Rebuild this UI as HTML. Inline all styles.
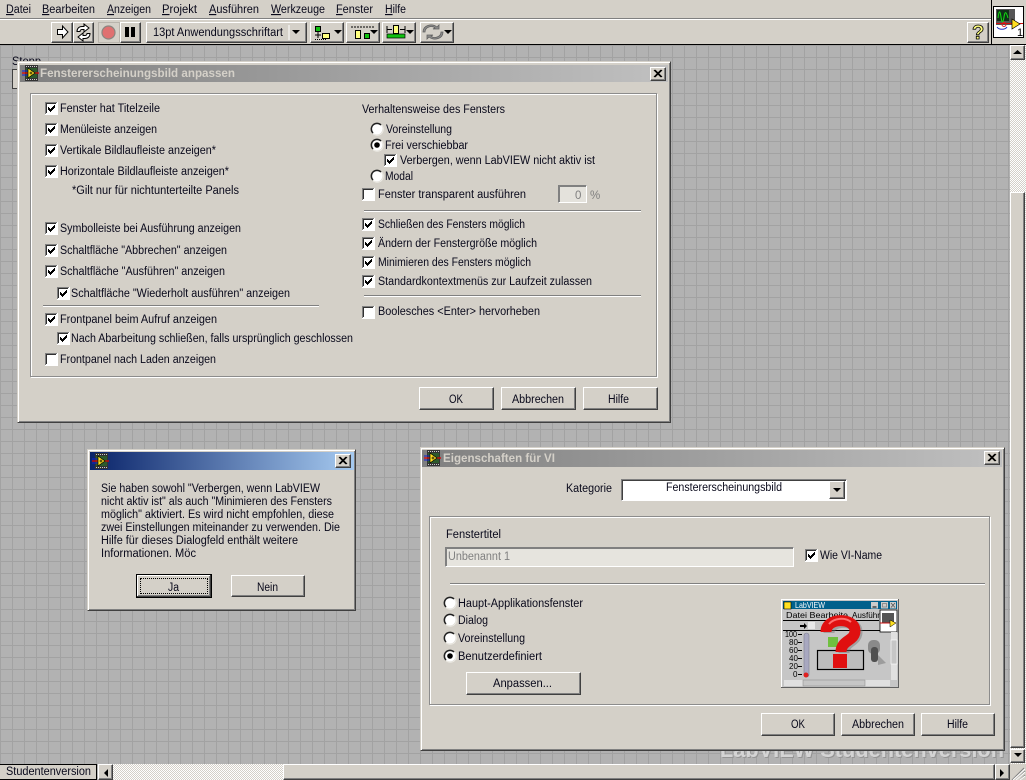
<!DOCTYPE html>
<html lang="de"><head><meta charset="utf-8"><title>LabVIEW</title>
<style>
html,body{margin:0;padding:0;width:1026px;height:780px;overflow:hidden;background:#b2b2b2}
.a,.b,.d,.t{position:absolute;box-sizing:border-box}
.a{background:#d4d0c8}
.b{background:#d4d0c8;border:1px solid;border-color:#fff #404040 #404040 #fff;box-shadow:inset -1px -1px #808080}
.d{background:#d4d0c8;border:1px solid;border-color:#d4d0c8 #404040 #404040 #d4d0c8;box-shadow:inset 1px 1px #fff,inset -1px -1px #808080}
.g{position:absolute;box-sizing:border-box;border:1px solid #8c8c8c;box-shadow:inset 1px 1px #fff,1px 1px #fff}
.s{position:absolute;box-sizing:border-box;border:1px solid;border-color:#808080 #fff #fff #808080;box-shadow:inset 1px 1px #404040}
svg{position:absolute;left:0;top:0}
text{font-family:"Liberation Sans",sans-serif;font-size:11.5px;fill:#08081a}
.grid{position:absolute;left:0;top:45px;width:1026px;height:735px;background-color:#b2b2b2;background-image:linear-gradient(#a2a2a2 1px,transparent 1px),linear-gradient(90deg,#a2a2a2 1px,transparent 1px);background-size:12px 12px}
</style></head><body>
<div class="grid"></div>
<svg width="1026" height="780" viewBox="0 0 1026 780">
<text x="12" y="65" textLength="29" lengthAdjust="spacingAndGlyphs">Stopp</text>
<rect x="12.500" y="69.500" width="20" height="19" fill="#d4d0c8" stroke="#404040"/>
<text x="721" y="758" textLength="284" lengthAdjust="spacingAndGlyphs" style="font-size:22px;font-weight:bold;fill:#949494">LabVIEW Studentenversion</text>
<text x="720" y="757" textLength="284" lengthAdjust="spacingAndGlyphs" style="font-size:22px;font-weight:bold;fill:#d4d4d4">LabVIEW Studentenversion</text>
</svg>

<!-- menu + toolbar -->
<div class="a" style="left:0;top:0;width:1026px;height:45px;border-bottom:1px solid #000"></div>
<div class="a" style="left:0;top:18px;width:991px;height:2px;background:#fff;border-top:1px solid #808080"></div>
<div class="a" style="left:991px;top:0;width:1px;height:45px;background:#000"></div>
<div class="b" style="left:51px;top:22px;width:22px;height:21px"></div>
<div class="b" style="left:73px;top:22px;width:21px;height:21px"></div>
<div class="a" style="left:98px;top:22px;width:22px;height:21px;border:1px solid #b8b4ac"></div>
<div class="b" style="left:120px;top:22px;width:21px;height:21px"></div>
<div class="b" style="left:146px;top:22px;width:161px;height:21px"></div>
<div class="b" style="left:310px;top:22px;width:34px;height:21px"></div>
<div class="b" style="left:346px;top:22px;width:34px;height:21px"></div>
<div class="b" style="left:382px;top:22px;width:34px;height:21px"></div>
<div class="b" style="left:420px;top:22px;width:34px;height:21px"></div>
<div class="b" style="left:967px;top:22px;width:22px;height:21px"></div>

<!-- right + bottom scrollbars -->
<div style="position:absolute;left:1010px;top:45px;width:16px;height:719px;background:repeating-conic-gradient(#fff 0 25%,#d4d0c8 0 50%) 0 0/2px 2px"></div>
<div class="b" style="left:1010px;top:45px;width:15px;height:15px"></div>
<div class="b" style="left:1010px;top:192px;width:15px;height:556px"></div>
<div class="b" style="left:1010px;top:749px;width:15px;height:14px"></div>
<div style="position:absolute;left:112px;top:764px;width:172px;height:16px;background:repeating-conic-gradient(#fff 0 25%,#d4d0c8 0 50%) 0 0/2px 2px"></div>
<div class="a" style="left:0;top:764px;width:97px;height:16px;border:1px solid #000;border-left:0"></div>
<div class="b" style="left:98px;top:764px;width:15px;height:16px"></div>
<div class="b" style="left:283px;top:764px;width:712px;height:16px"></div>
<div class="b" style="left:995px;top:764px;width:15px;height:16px"></div>
<div class="a" style="left:1010px;top:764px;width:16px;height:16px"></div>

<!-- dialog 1 -->
<div class="d" style="left:17px;top:61px;width:654px;height:362px"></div>
<div class="t" style="left:20px;top:65px;width:648px;height:17px;background:linear-gradient(90deg,#808080,#c0c0c0)"></div>
<div class="b" style="left:650px;top:67px;width:16px;height:14px"></div>
<div class="g" style="left:30px;top:93px;width:627px;height:284px"></div>
<div class="a" style="left:43px;top:305px;width:276px;height:2px;background:#fff;border-top:1px solid #808080"></div>
<div class="a" style="left:364px;top:210px;width:277px;height:2px;background:#fff;border-top:1px solid #808080"></div>
<div class="a" style="left:364px;top:295px;width:277px;height:2px;background:#fff;border-top:1px solid #808080"></div>
<div class="s" style="left:558px;top:185px;width:29px;height:18px;background:#e4e2dc;box-shadow:inset 1px 1px #808080"></div>
<div class="b" style="left:419px;top:387px;width:75px;height:23px"></div>
<div class="b" style="left:501px;top:387px;width:75px;height:23px"></div>
<div class="b" style="left:583px;top:387px;width:75px;height:23px"></div>

<!-- dialog 2 -->
<div class="d" style="left:87px;top:449px;width:269px;height:162px"></div>
<div class="t" style="left:90px;top:452px;width:264px;height:18px;background:linear-gradient(90deg,#0a246a,#a6caf0)"></div>
<div class="b" style="left:335px;top:454px;width:16px;height:14px"></div>
<div class="b" style="left:136px;top:574px;width:76px;height:24px;border:1px solid #000;box-shadow:inset -1px -1px #404040,inset 1px 1px #fff,inset -2px -2px #808080"></div>
<div class="t" style="left:140px;top:578px;width:68px;height:16px;border:1px dotted #000"></div>
<div class="b" style="left:231px;top:575px;width:74px;height:22px"></div>

<!-- dialog 3 -->
<div class="d" style="left:420px;top:447px;width:585px;height:304px"></div>
<div class="t" style="left:422px;top:450px;width:580px;height:17px;background:linear-gradient(90deg,#808080,#c0c0c0)"></div>
<div class="b" style="left:984px;top:451px;width:16px;height:14px"></div>
<div class="s" style="left:621px;top:479px;width:226px;height:22px;background:#fff"></div>
<div class="b" style="left:829px;top:481px;width:16px;height:18px"></div>
<div class="g" style="left:429px;top:516px;width:561px;height:189px"></div>
<div class="s" style="left:445px;top:547px;width:349px;height:20px;background:#e6e4de;box-shadow:inset 1px 1px #808080"></div>
<div class="a" style="left:450px;top:583px;width:535px;height:2px;background:#fff;border-top:1px solid #808080"></div>
<div class="b" style="left:466px;top:672px;width:115px;height:23px"></div>
<div class="b" style="left:761px;top:713px;width:74px;height:23px"></div>
<div class="b" style="left:841px;top:713px;width:74px;height:23px"></div>
<div class="b" style="left:921px;top:713px;width:74px;height:23px"></div>

<svg width="1026" height="780" viewBox="0 0 1026 780">
<defs>
<g id="cb"><rect x="0" y="0" width="13" height="13" fill="#fff"/><path d="M0.500 12V0.500H12" fill="none" stroke="#808080"/><path d="M1.500 11V1.500H11" fill="none" stroke="#303030"/></g>
<g id="ck"><use href="#cb"/><path d="M3 5h1v1h1v1h1V6h1V5h1V4h1V3h1v3H9v1H8v1H7v1H6v1H5V9H4V8H3z" fill="#000" shape-rendering="crispEdges"/></g>
<g id="ra"><circle cx="6" cy="6" r="5.500" fill="#fff"/><path d="M10 2A5.600 5.600 0 0 0 2 10" fill="none" stroke="#202020" stroke-width="1.500"/><path d="M2 10.500A5.800 5.800 0 0 0 10.500 2" fill="none" stroke="#eceae4"/></g>
<g id="rs"><use href="#ra"/><circle cx="6" cy="6" r="2.800" fill="#000"/></g>
<g id="x"><path d="M0 0l7 7M7 0L0 7M1 0l7 7M8 0L1 7" stroke="#000" stroke-width="1.100" fill="none"/></g>
<g id="lv"><rect x="3" y="0" width="13" height="16" fill="#333"/><path d="M4 1.500h11M4 14.500h11" stroke="#ccc" stroke-dasharray="1 1"/><rect x="4" y="3" width="11" height="10" fill="#2c5a2c"/><path d="M0 8h17" stroke="#e00000" stroke-width="1.200"/><path d="M0 6h6M0 10h6" stroke="#1020d0"/><path d="M6 3l7 5-7 5z" fill="#ffe020" stroke="#000" stroke-width=".7"/><path d="M7.500 8h3M9 6.500v3" stroke="#000" stroke-width=".8"/></g>
</defs>

<!-- Menu -->
<g>
<text x="6" y="13" textLength="25" lengthAdjust="spacingAndGlyphs"><tspan style="text-decoration:underline">D</tspan>atei</text>
<text x="42" y="13" textLength="53" lengthAdjust="spacingAndGlyphs"><tspan style="text-decoration:underline">B</tspan>earbeiten</text>
<text x="107" y="13" textLength="44" lengthAdjust="spacingAndGlyphs"><tspan style="text-decoration:underline">A</tspan>nzeigen</text>
<text x="162" y="13" textLength="35" lengthAdjust="spacingAndGlyphs"><tspan style="text-decoration:underline">P</tspan>rojekt</text>
<text x="209" y="13" textLength="50" lengthAdjust="spacingAndGlyphs"><tspan style="text-decoration:underline">A</tspan>usführen</text>
<text x="271" y="13" textLength="54" lengthAdjust="spacingAndGlyphs"><tspan style="text-decoration:underline">W</tspan>erkzeuge</text>
<text x="336" y="13" textLength="37" lengthAdjust="spacingAndGlyphs"><tspan style="text-decoration:underline">F</tspan>enster</text>
<text x="385" y="13" textLength="21" lengthAdjust="spacingAndGlyphs"><tspan style="text-decoration:underline">H</tspan>ilfe</text>
</g>

<!-- Toolbar icons -->
<path d="M57.500 29.500h5v-3.500l5.500 6-5.500 6v-3.500h-5z" fill="#fff" stroke="#000"/>
<path d="M77 31.500c0-3 2-5 5-5h2v-2.500l5 4-5 4v-2.500h-2c-1 0-2 .8-2 2zM90 33.500c0 3-2 5-5 5h-2v2.500l-5-4 5-4v2.500h2c1 0 2-.8 2-2z" fill="#fff" stroke="#000"/>
<circle cx="108.500" cy="32.500" r="6.500" fill="#e07070" stroke="#8a8680" stroke-width="1.200"/>
<rect x="125" y="27" width="4" height="10" fill="#000"/><rect x="131" y="27" width="4" height="10" fill="#000"/>
<text x="153" y="36" textLength="130" lengthAdjust="spacingAndGlyphs">13pt Anwendungsschriftart</text>
<path d="M289 25v15" stroke="#fff"/><path d="M292 30h8l-4 4z" fill="#000"/>
<rect x="315.500" y="26.500" width="5" height="5" fill="#10c010" stroke="#000"/><rect x="322.500" y="33.500" width="7" height="5" fill="#ffff80" stroke="#000"/><path d="M315 35h6M318 32v6" stroke="#000"/><path d="M315 39.500h12" stroke="#000" stroke-dasharray="1 1"/><path d="M334 30h8l-4 4z" fill="#000"/>
<path d="M351 27h23" stroke="#000" stroke-dasharray="2 1"/><rect x="355.500" y="30.500" width="5" height="8" fill="#ffff80" stroke="#000"/><rect x="364.500" y="33.500" width="5" height="5" fill="#10c010" stroke="#000"/><path d="M370 30h8l-4 4z" fill="#000"/>
<rect x="393.500" y="25.500" width="5" height="8" fill="#ffff80" stroke="#000"/><rect x="387" y="34" width="18" height="4" fill="#10c010" stroke="#000" stroke-width=".7"/><path d="M387 29.500h5M400 29.500h5M387 26v7M405 26v7" stroke="#000"/><path d="M406 30h8l-4 4z" fill="#000"/>
<path d="M425 32c0-5 7-7 10-4l-2 1h6v-4l-2 2c-5-4-14-2-14 5zM441 32c0 5-7 7-10 4l2-1h-6v4l2-2c5 4 14 2 14-5z" fill="#8c8c8c" stroke="#606060" stroke-width=".8"/><path d="M444 30h8l-4 4z" fill="#000"/>
<text x="972" y="39" style="font-size:20px;font-weight:bold;fill:#ffff80;stroke:#000;stroke-width:.8">?</text>

<!-- VI icon -->
<rect x="993.500" y="6.500" width="30" height="31" fill="#fff" stroke="#000"/>
<rect x="996" y="9" width="19" height="16" fill="#555"/><rect x="997" y="10" width="12" height="11" fill="#103018"/>
<path d="M998 18c1-8 2-8 3-1s2 6 3 0 2-6 4 1" fill="none" stroke="#10e010"/>
<path d="M997 27c2 3 8 3 10 0" fill="none" stroke="#2030c0"/><circle cx="1004" cy="24.500" r="2" fill="none" stroke="#e02020"/>
<path d="M996 23.500h27" stroke="#d01010"/><path d="M1012 19l8 5-8 5z" fill="#ffe020" stroke="#000" stroke-width=".7"/>
<text x="1017" y="36" style="font-size:11px;fill:#000">1</text>

<!-- Scrollbar arrows -->
<path d="M1013 54h9l-4.500-4z" fill="#000"/><path d="M1014 753h8l-4 4z" fill="#000"/>
<path d="M108 769v8l-4-4z" fill="#000"/><path d="M1000 769v8l4-4z" fill="#000"/>
<path d="M1024 768l-12 12M1025 771l-9 9M1025 775l-5 5" stroke="#808080"/><path d="M1025 769l-12 11M1025 772l-9 8M1025 776l-5 4" stroke="#fff"/>
<text x="6" y="775" textLength="85" lengthAdjust="spacingAndGlyphs">Studentenversion</text>

<!-- Dialog 1 -->
<use href="#lv" x="22" y="65"/>
<text x="40" y="77" textLength="195" lengthAdjust="spacingAndGlyphs" style="font-weight:bold;fill:#d4d0c8">Fenstererscheinungsbild anpassen</text>
<use href="#x" x="654" y="70"/>
<use href="#ck" x="45" y="102"/><text x="60" y="112" textLength="100" lengthAdjust="spacingAndGlyphs">Fenster hat Titelzeile</text>
<use href="#ck" x="45" y="123"/><text x="60" y="133" textLength="97" lengthAdjust="spacingAndGlyphs">Menüleiste anzeigen</text>
<use href="#ck" x="45" y="144"/><text x="60" y="154" textLength="156" lengthAdjust="spacingAndGlyphs">Vertikale Bildlaufleiste anzeigen*</text>
<use href="#ck" x="45" y="165"/><text x="60" y="175" textLength="169" lengthAdjust="spacingAndGlyphs">Horizontale Bildlaufleiste anzeigen*</text>
<text x="72" y="194" textLength="167" lengthAdjust="spacingAndGlyphs">*Gilt nur für nichtunterteilte Panels</text>
<use href="#ck" x="45" y="222"/><text x="60" y="232" textLength="181" lengthAdjust="spacingAndGlyphs">Symbolleiste bei Ausführung anzeigen</text>
<use href="#ck" x="45" y="244"/><text x="60" y="254" textLength="167" lengthAdjust="spacingAndGlyphs">Schaltfläche "Abbrechen" anzeigen</text>
<use href="#ck" x="45" y="265"/><text x="60" y="275" textLength="165" lengthAdjust="spacingAndGlyphs">Schaltfläche "Ausführen" anzeigen</text>
<use href="#ck" x="57" y="287"/><text x="71" y="297" textLength="219" lengthAdjust="spacingAndGlyphs">Schaltfläche "Wiederholt ausführen" anzeigen</text>
<use href="#ck" x="45" y="313"/><text x="60" y="323" textLength="157" lengthAdjust="spacingAndGlyphs">Frontpanel beim Aufruf anzeigen</text>
<use href="#ck" x="57" y="332"/><text x="71" y="342" textLength="282" lengthAdjust="spacingAndGlyphs">Nach Abarbeitung schließen, falls ursprünglich geschlossen</text>
<use href="#cb" x="45" y="353"/><text x="60" y="363" textLength="156" lengthAdjust="spacingAndGlyphs">Frontpanel nach Laden anzeigen</text>

<text x="362" y="113" textLength="143" lengthAdjust="spacingAndGlyphs">Verhaltensweise des Fensters</text>
<use href="#ra" x="371" y="123"/><text x="386" y="133" textLength="66" lengthAdjust="spacingAndGlyphs">Voreinstellung</text>
<use href="#rs" x="371" y="139"/><text x="385" y="149" textLength="83" lengthAdjust="spacingAndGlyphs">Frei verschiebbar</text>
<use href="#ck" x="384" y="154"/><text x="400" y="164" textLength="195" lengthAdjust="spacingAndGlyphs">Verbergen, wenn LabVIEW nicht aktiv ist</text>
<use href="#ra" x="371" y="170"/><text x="385" y="180" textLength="28" lengthAdjust="spacingAndGlyphs">Modal</text>
<use href="#cb" x="362" y="188"/><text x="378" y="198" textLength="148" lengthAdjust="spacingAndGlyphs">Fenster transparent ausführen</text>
<text x="575" y="199" style="fill:#808080">0</text><text x="590" y="199" style="fill:#808080">%</text>
<use href="#ck" x="362" y="218"/><text x="378" y="228" textLength="147" lengthAdjust="spacingAndGlyphs">Schließen des Fensters möglich</text>
<use href="#ck" x="362" y="237"/><text x="378" y="247" textLength="159" lengthAdjust="spacingAndGlyphs">Ändern der Fenstergröße möglich</text>
<use href="#ck" x="362" y="256"/><text x="378" y="266" textLength="153" lengthAdjust="spacingAndGlyphs">Minimieren des Fensters möglich</text>
<use href="#ck" x="362" y="275"/><text x="378" y="285" textLength="214" lengthAdjust="spacingAndGlyphs">Standardkontextmenüs zur Laufzeit zulassen</text>
<use href="#cb" x="362" y="306"/><text x="378" y="315" textLength="162" lengthAdjust="spacingAndGlyphs">Boolesches &lt;Enter&gt; hervorheben</text>
<text x="449" y="403" textLength="14" lengthAdjust="spacingAndGlyphs">OK</text>
<text x="512" y="403" textLength="52" lengthAdjust="spacingAndGlyphs">Abbrechen</text>
<text x="608" y="403" textLength="21" lengthAdjust="spacingAndGlyphs">Hilfe</text>

<!-- Dialog 2 -->
<use href="#lv" x="92" y="453"/>
<use href="#x" x="339" y="457"/>
<text x="101" y="492" textLength="219" lengthAdjust="spacingAndGlyphs">Sie haben sowohl "Verbergen, wenn LabVIEW</text>
<text x="101" y="505" textLength="231" lengthAdjust="spacingAndGlyphs">nicht aktiv ist" als auch "Minimieren des Fensters</text>
<text x="101" y="518" textLength="233" lengthAdjust="spacingAndGlyphs">möglich" aktiviert. Es wird nicht empfohlen, diese</text>
<text x="101" y="531" textLength="239" lengthAdjust="spacingAndGlyphs">zwei Einstellungen miteinander zu verwenden. Die</text>
<text x="101" y="544" textLength="197" lengthAdjust="spacingAndGlyphs">Hilfe für dieses Dialogfeld enthält weitere</text>
<text x="101" y="557" textLength="95" lengthAdjust="spacingAndGlyphs">Informationen. Möc</text>
<text x="168" y="591" textLength="11" lengthAdjust="spacingAndGlyphs">Ja</text>
<text x="257" y="591" textLength="21" lengthAdjust="spacingAndGlyphs">Nein</text>

<!-- Dialog 3 -->
<use href="#lv" x="424" y="450"/>
<text x="443" y="462" textLength="112" lengthAdjust="spacingAndGlyphs" style="font-weight:bold;fill:#d4d0c8">Eigenschaften für VI</text>
<use href="#x" x="988" y="454"/>
<text x="566" y="492" textLength="46" lengthAdjust="spacingAndGlyphs">Kategorie</text>
<text x="666" y="491" textLength="116" lengthAdjust="spacingAndGlyphs">Fenstererscheinungsbild</text>
<path d="M833 488h8l-4 4z" fill="#000"/>
<text x="446" y="538" textLength="55" lengthAdjust="spacingAndGlyphs">Fenstertitel</text>
<text x="448" y="560" textLength="62" lengthAdjust="spacingAndGlyphs" style="fill:#808080">Unbenannt 1</text>
<use href="#ck" x="805" y="549"/><text x="820" y="559" textLength="62" lengthAdjust="spacingAndGlyphs">Wie VI-Name</text>
<use href="#ra" x="444" y="597"/><text x="458" y="607" textLength="125" lengthAdjust="spacingAndGlyphs">Haupt-Applikationsfenster</text>
<use href="#ra" x="444" y="614"/><text x="458" y="624" textLength="30" lengthAdjust="spacingAndGlyphs">Dialog</text>
<use href="#ra" x="444" y="632"/><text x="458" y="642" textLength="67" lengthAdjust="spacingAndGlyphs">Voreinstellung</text>
<use href="#rs" x="444" y="650"/><text x="458" y="660" textLength="84" lengthAdjust="spacingAndGlyphs">Benutzerdefiniert</text>
<text x="493" y="687" textLength="59" lengthAdjust="spacingAndGlyphs">Anpassen...</text>
<text x="791" y="728" textLength="14" lengthAdjust="spacingAndGlyphs">OK</text>
<text x="852" y="728" textLength="52" lengthAdjust="spacingAndGlyphs">Abbrechen</text>
<text x="947" y="728" textLength="21" lengthAdjust="spacingAndGlyphs">Hilfe</text>

<!-- Preview image -->
<rect x="781" y="599" width="118" height="88" fill="#c6c6c6"/>
<path d="M781.500 687V599.500H898" fill="none" stroke="#fff"/><path d="M898.500 599V687.500H781" fill="none" stroke="#606060"/>
<rect x="783" y="601" width="114" height="8" fill="#00608c"/>
<rect x="784" y="602" width="7" height="7" fill="#ffe020" stroke="#000" stroke-width=".6"/>
<text x="795" y="608" textLength="30" lengthAdjust="spacingAndGlyphs" style="font-size:8.500px;fill:#fff">LabVIEW</text>
<rect x="871" y="602" width="7" height="6.500" fill="#ccc"/><rect x="881" y="602" width="7" height="6.500" fill="#ccc"/><rect x="890" y="602" width="6" height="6.500" fill="#ccc"/>
<path d="M872.500 607h4" stroke="#000"/><rect x="882.500" y="603.500" width="4" height="3.500" fill="none" stroke="#777" stroke-width=".7"/><path d="M891 603l4 4.500M895 603l-4 4.500" stroke="#555" stroke-width=".8"/>
<rect x="783" y="610" width="114" height="10" fill="#c6c6c6"/>
<text x="786" y="618" textLength="62" lengthAdjust="spacingAndGlyphs" style="font-size:8.500px;fill:#000">Datei Bearbeite</text>
<text x="852" y="618" textLength="28" lengthAdjust="spacingAndGlyphs" style="font-size:8.500px;fill:#000">Ausführ</text>
<path d="M783 620.500h96M783 630.500h98" stroke="#000"/>
<path d="M800 625h4v-2l3 3-3 3v-2h-4z" fill="#000"/><rect x="808" y="622" width="7" height="7" fill="#e8e8e8"/>
<rect x="880" y="610" width="17" height="22" fill="#fff" stroke="#000" stroke-width=".8"/><rect x="882" y="613" width="12" height="10" fill="#555"/><path d="M880 623h16" stroke="#d01010"/><path d="M890 620l6 3-6 4z" fill="#ffe020" stroke="#000" stroke-width=".5"/>
<text x="785" y="637" textLength="12" lengthAdjust="spacingAndGlyphs" style="font-size:8px;fill:#000">100</text>
<text x="789" y="645" style="font-size:8px;fill:#000">80</text><text x="789" y="653" style="font-size:8px;fill:#000">60</text><text x="789" y="661" style="font-size:8px;fill:#000">40</text><text x="789" y="669" style="font-size:8px;fill:#000">20</text><text x="793" y="677" style="font-size:8px;fill:#000">0</text>
<path d="M798 634.500h4M798 642.500h4M798 650.500h4M798 658.500h4M798 666.500h4M798 674.500h4" stroke="#000"/>
<rect x="804" y="633" width="5" height="44" rx="2.500" fill="#a8a8c0" stroke="#808090" stroke-width=".6"/><circle cx="806" cy="675" r="2.500" fill="#e02020"/>
<rect x="828" y="637" width="10" height="10" fill="#70c040"/>
<rect x="817.500" y="650.500" width="46" height="19" fill="#bdbdbd" stroke="#000" stroke-width="1.200"/>
<path d="M829 633c0-14 28-14 28-1 0 10-13 9-13 21" fill="none" stroke="#707070" stroke-width="11" opacity=".45"/>
<path d="M826 632c0-15 29-15 29-1 0 10-14 9-14 21" fill="none" stroke="#e01010" stroke-width="11"/>
<rect x="833" y="654" width="14" height="14" fill="#e01010"/>
<path d="M829 624c5-6 16-7 22-2" fill="none" stroke="#ff7070" stroke-width="2"/>
<rect x="868" y="640" width="12" height="14" rx="5" fill="#8a8a8a"/><rect x="871" y="647" width="7" height="15" rx="3" fill="#505050"/><path d="M878 655l8 8-8 2z" fill="#9c9c9c"/>
<rect x="891" y="632" width="6" height="48" fill="#e0e0e0"/><rect x="891" y="640" width="6" height="24" fill="#c6c6c6" stroke="#fff" stroke-width=".6"/>
<rect x="784" y="680" width="106" height="6" fill="#e0e0e0"/><rect x="803" y="680" width="62" height="6" fill="#c6c6c6" stroke="#888" stroke-width=".5"/>
</svg>
</body></html>
